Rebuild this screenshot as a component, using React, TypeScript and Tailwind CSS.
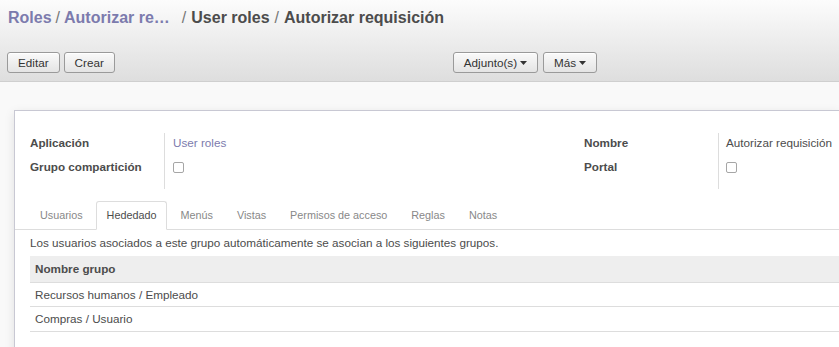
import React from "react";

const tabs = ["Usuarios", "Hededado", "Menús", "Vistas", "Permisos de acceso", "Reglas", "Notas"];
const rows = ["Recursos humanos / Empleado", "Compras / Usuario"];

function Btn({ children }: { children: React.ReactNode }) {
  return (
    <button className="flex h-[21px] items-center rounded-[3px] border border-[#9a9a9a] bg-gradient-to-b from-[#fafafa] to-[#e4e4e4] px-[10px] text-[11.7px] leading-none text-[#333] shadow-[inset_0_1px_0_#fff]">
      {children}
    </button>
  );
}

function Caret() {
  return (
    <svg width="7" height="4" viewBox="0 0 7 4" className="ml-[3px]">
      <path d="M0 0h7L3.5 4z" fill="#333" />
    </svg>
  );
}

function Check() {
  return <span className="block h-[11px] w-[11px] rounded-[2px] border border-[#a6a6a6] bg-white" />;
}

export default function App() {
  return (
    <div
      className="h-[347px] w-[839px] overflow-hidden bg-[#f9f9f9] text-[#4c4c4c]"
      style={{ fontFamily: "'Liberation Sans', Arial, sans-serif" }}
    >
      <div className="h-[82px] border-b border-[#cfcfcf] bg-gradient-to-b from-[#fcfcfc] to-[#dedede] px-[8px]">
        <div className="flex h-[36px] items-center text-[16px] font-bold">
          <span className="text-[#7c7bad]">Roles</span>
          <span className="mx-[4px] font-normal text-[#777]">/</span>
          <span className="text-[#7c7bad]">Autorizar re…</span>
          <span className="ml-[12px] mr-[5px] font-normal text-[#777]">/</span>
          <span className="text-[#4c4c4c]">User roles</span>
          <span className="mx-[5px] font-normal text-[#777]">/</span>
          <span className="text-[#4c4c4c]">Autorizar requisición</span>
        </div>
        <div className="mt-[16px] flex items-center">
          <div className="-ml-px flex gap-[4px]">
            <Btn>Editar</Btn>
            <Btn>Crear</Btn>
          </div>
          <div className="ml-[338px] flex gap-[5px]">
            <Btn>
              Adjunto(s)
              <Caret />
            </Btn>
            <Btn>
              Más
              <Caret />
            </Btn>
          </div>
        </div>
      </div>

      <div className="pl-[14px] pt-[28px]">
        <div className="h-[260px] border border-r-0 border-[#c8c8d3] bg-white shadow-[0_3px_10px_rgba(0,0,0,0.1)]">
          <div className="flex pt-[22px] text-[11.7px]">
            <div className="flex w-[569px] pl-[15px]">
              <div className="flex w-[134px] flex-col gap-[8px] py-[2px] font-bold text-[#4c4c4c]">
                <span className="h-[16px] leading-[16px]">Aplicación</span>
                <span className="h-[16px] leading-[16px]">Grupo compartición</span>
              </div>
              <div className="flex flex-col gap-[8px] border-l border-[#ddd] py-[2px] pb-[14px] pl-[8px]">
                <span className="h-[16px] leading-[16px] text-[#7c7bad]">User roles</span>
                <span className="flex h-[16px] items-center">
                  <Check />
                </span>
              </div>
            </div>
            <div className="flex">
              <div className="flex w-[134px] flex-col gap-[8px] py-[2px] font-bold">
                <span className="h-[16px] leading-[16px]">Nombre</span>
                <span className="h-[16px] leading-[16px]">Portal</span>
              </div>
              <div className="flex flex-col gap-[8px] border-l border-[#ddd] py-[2px] pb-[14px] pl-[7px]">
                <span className="h-[16px] whitespace-nowrap leading-[16px]">Autorizar requisición</span>
                <span className="flex h-[16px] items-center">
                  <Check />
                </span>
              </div>
            </div>
          </div>

          <div className="mt-[12px] flex border-b border-[#ddd] pl-[14px] text-[10.8px]">
            {tabs.map((t) =>
              t === "Hededado" ? (
                <div
                  key={t}
                  className="-mb-px mr-[2px] flex h-[29px] items-center rounded-t-[3px] border border-b-white border-[#ddd] bg-white px-[10px] text-[#4c4c4c]"
                >
                  {t}
                </div>
              ) : (
                <div key={t} className="mr-[2px] flex h-[28px] items-center px-[11px] text-[#888]">
                  {t}
                </div>
              )
            )}
          </div>

          <div className="pl-[15px] text-[11.7px]">
            <p className="py-[5px] leading-[16px]">
              Los usuarios asociados a este grupo automáticamente se asocian a los siguientes grupos.
            </p>
            <div className="border-b border-[#ddd]">
              <div className="flex h-[27px] items-center border-b border-[#ddd] bg-[#eeeeee] px-[5px] font-bold">
                Nombre grupo
              </div>
              {rows.map((r, i) => (
                <div
                  key={r}
                  className={`flex h-[24px] items-center px-[5px] ${i ? "" : "border-b border-[#ddd]"}`}
                >
                  {r}
                </div>
              ))}
            </div>
          </div>
        </div>
      </div>
    </div>
  );
}
